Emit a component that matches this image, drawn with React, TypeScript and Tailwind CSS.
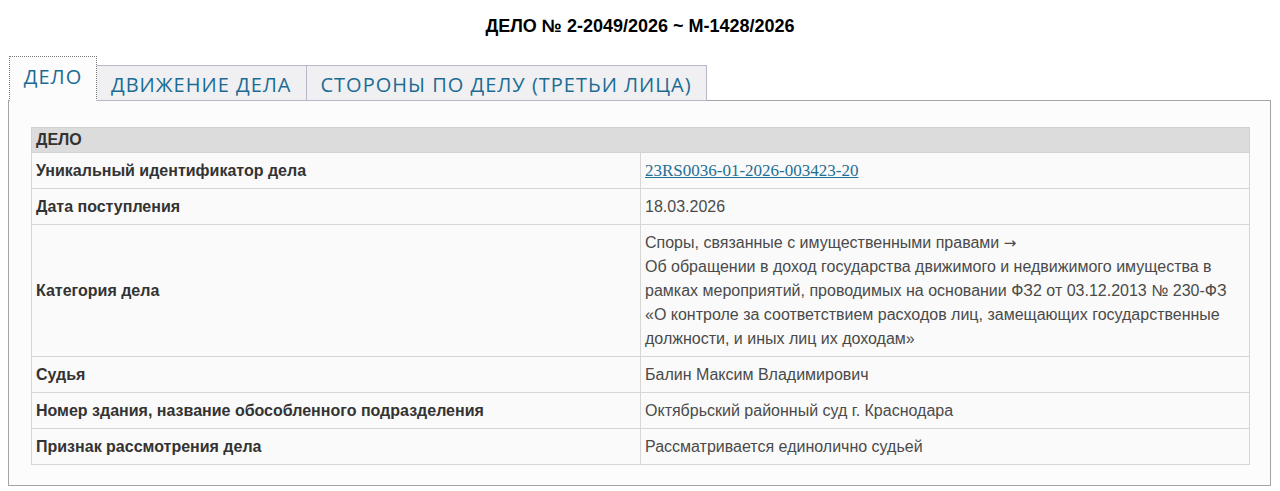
const rows: { label: string; value: React.ReactNode }[] = [
  {
    label: 'Уникальный идентификатор дела',
    value: (
      <a href="#" className="font-['Liberation_Serif',serif] text-[17px] text-[#1f6f95] underline">
        23RS0036-01-2026-003423-20
      </a>
    ),
  },
  { label: 'Дата поступления', value: '18.03.2026' },
  {
    label: 'Категория дела',
    value: (
      <>
        Споры, связанные с имущественными правами <span className="font-['DejaVu_Sans',sans-serif] text-[15px]">→</span>
        <br />
        Об обращении в доход государства движимого и недвижимого имущества в рамках мероприятий, проводимых на
        основании ФЗ2 от 03.12.2013 № 230-ФЗ «О контроле за соответствием расходов лиц, замещающих
        государственные должности, и иных лиц их доходам»
      </>
    ),
  },
  { label: 'Судья', value: 'Балин Максим Владимирович' },
  { label: 'Номер здания, название обособленного подразделения', value: 'Октябрьский районный суд г. Краснодара' },
  { label: 'Признак рассмотрения дела', value: 'Рассматривается единолично судьей' },
]

export default function App() {
  return (
    <div className="min-h-screen bg-white font-['Liberation_Sans',Arial,sans-serif] text-[#333]">
      <h1 className="pt-[16px] text-center text-[18px] font-bold leading-[20px] text-black">
        ДЕЛО № 2-2049/2026 ~ М-1428/2026
      </h1>

      <div className="mt-[20px] pl-[8px] pr-[9px]">
        {/* Tabs */}
        <div className="relative z-10 -mb-px flex items-end pl-px font-['Open_Sans',sans-serif] text-[20px] tracking-[1px] text-[#1b6b93]">
          <div className="flex h-[45px] w-[88px] items-center justify-center border border-dotted border-[#777] border-b-[#fcfcfc] bg-[#fcfcfc] pb-[3px]">
            ДЕЛО
          </div>
          <div className="flex h-[36px] items-center border border-l-0 border-[#b7b7c7] bg-[#f0f0f2] px-[14px] pt-[3px]">
            ДВИЖЕНИЕ ДЕЛА
          </div>
          <div className="flex h-[36px] items-center border border-l-0 border-[#b7b7c7] bg-[#f0f0f2] px-[14px] pt-[3px]">
            СТОРОНЫ ПО ДЕЛУ (ТРЕТЬИ ЛИЦА)
          </div>
        </div>

        {/* Panel */}
        <div className="border border-[#a4a4a4] bg-[#fcfcfc] pb-[20px] pl-[22px] pr-[20px] pt-[26px]">
          <table className="w-full border-collapse text-[16px]">
            <tbody>
              <tr>
                <th
                  colSpan={2}
                  className="border border-[#d2d2d2] bg-[#dcdcdc] px-[4px] py-[3px] text-left font-bold leading-[18px] text-[#333]"
                >
                  ДЕЛО
                </th>
              </tr>
              {rows.map((r) => (
                <tr key={r.label}>
                  <td className="w-[609px] border border-[#d6d6d6] bg-[#fafafa] px-[4px] pb-[5px] pt-[6px] align-middle font-bold leading-[24px] text-[#333]">
                    {r.label}
                  </td>
                  <td className="border border-[#d6d6d6] bg-[#fafafa] px-[4px] pb-[5px] pt-[6px] align-middle leading-[24px] text-[#4a4a4a]">
                    {r.value}
                  </td>
                </tr>
              ))}
            </tbody>
          </table>
        </div>
      </div>
    </div>
  )
}
